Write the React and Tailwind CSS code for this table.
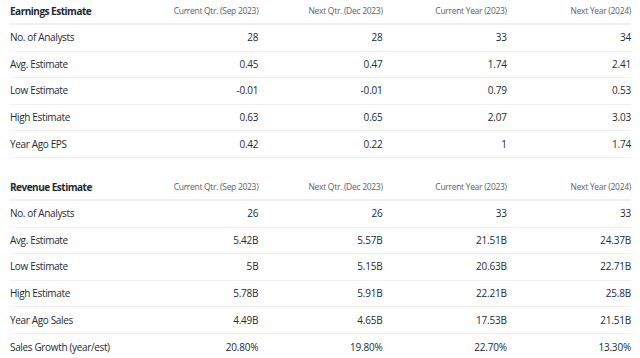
import React from "react";

const cols = [
  "Current Qtr. (Sep 2023)",
  "Next Qtr. (Dec 2023)",
  "Current Year (2023)",
  "Next Year (2024)",
];

const earnings = [
  ["No. of Analysts", "28", "28", "33", "34"],
  ["Avg. Estimate", "0.45", "0.47", "1.74", "2.41"],
  ["Low Estimate", "-0.01", "-0.01", "0.79", "0.53"],
  ["High Estimate", "0.63", "0.65", "2.07", "3.03"],
  ["Year Ago EPS", "0.42", "0.22", "1", "1.74"],
];

const revenue = [
  ["No. of Analysts", "26", "26", "33", "33"],
  ["Avg. Estimate", "5.42B", "5.57B", "21.51B", "24.37B"],
  ["Low Estimate", "5B", "5.15B", "20.63B", "22.71B"],
  ["High Estimate", "5.78B", "5.91B", "22.21B", "25.8B"],
  ["Year Ago Sales", "4.49B", "4.65B", "17.53B", "21.51B"],
  ["Sales Growth (year/est)", "20.80%", "19.80%", "22.70%", "13.30%"],
];

function EstimateTable({ title, rows, last }) {
  return (
    <div>
      <div className="grid grid-cols-5 items-center h-[25px] border-b-2 border-[#f0f0f0]">
        <div className="text-[10px] font-bold tracking-[-0.5px] text-[#232a31]">
          {title}
        </div>
        {cols.map((c) => (
          <div
            key={c}
            className="text-right text-[8.5px] tracking-[-0.3px] text-[#5b636a]"
          >
            {c}
          </div>
        ))}
      </div>
      {rows.map((r, i) => (
        <div
          key={r[0]}
          className={`grid grid-cols-5 items-center h-[26.6px] ${
            last && i === rows.length - 1 ? "" : "border-b border-[#f0f0f0]"
          }`}
        >
          <div className="text-[10px] tracking-[-0.35px] text-[#232a31]">
            {r[0]}
          </div>
          {r.slice(1).map((v, j) => (
            <div
              key={j}
              className="text-right text-[10px] tracking-[-0.2px] text-[#232a31]"
            >
              {v}
            </div>
          ))}
        </div>
      ))}
    </div>
  );
}

export default function App() {
  return (
    <div
      className="w-[640px] h-[358px] overflow-hidden bg-white pl-[10px] pr-[9px]"
      style={{ fontFamily: '"Open Sans", sans-serif' }}
    >
      <EstimateTable title="Earnings Estimate" rows={earnings} />
      <div className="h-[18px]" />
      <EstimateTable title="Revenue Estimate" rows={revenue} last />
    </div>
  );
}
